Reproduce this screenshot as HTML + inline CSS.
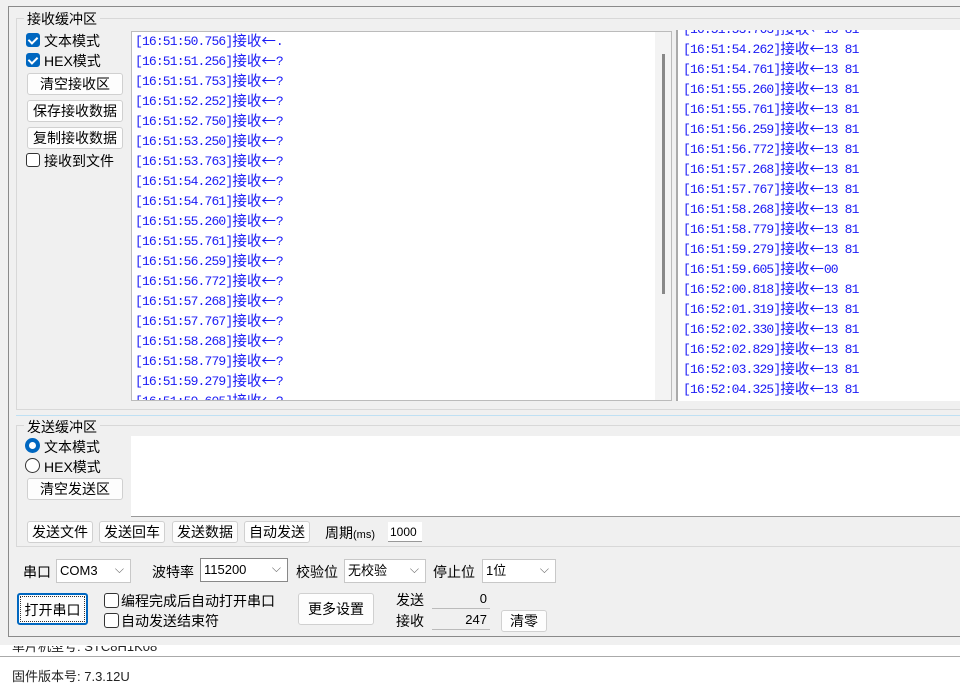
<!DOCTYPE html>
<html><head><meta charset="utf-8"><style>
*{margin:0;padding:0;box-sizing:border-box}
body{width:960px;height:680px;overflow:hidden;background:#fff;font-family:"Liberation Sans","Noto Sans CJK SC",sans-serif;font-size:14px;color:#000;position:relative}
.a{position:absolute}
.log{font-family:"Liberation Mono","Noto Sans CJK SC",monospace;font-size:13px;letter-spacing:-0.85px;color:#1a1af5}
.log div{height:20px;line-height:20px;white-space:nowrap;overflow:visible}
.log b{font-weight:normal;font-size:14.5px;letter-spacing:0;font-family:"Noto Sans CJK SC",sans-serif;line-height:0;position:relative;top:1px}
.btn{position:absolute;background:#fdfdfd;border:1px solid #d0d0d0;border-radius:3px;font-size:14px;text-align:center;line-height:20px;height:22px}
.cb{position:absolute;width:14px;height:14px;border:1px solid #333;border-radius:3px;background:#fff}
.cb.on{background:#0067c0;border-color:#0067c0}
.cb.on::after{content:"";position:absolute;left:3px;top:1px;width:4px;height:7px;border:solid #fff;border-width:0 2px 2px 0;transform:rotate(45deg)}
.rb{position:absolute;width:15px;height:15px;border:1px solid #333;border-radius:50%;background:#fff}
.rb.on{border:4px solid #0067c0}
.sel{position:absolute;background:#fff;border:1px solid #c8c8c8;height:24px;font-size:13px;line-height:22px;padding-left:3px}
.sel::after{content:"⌵";position:absolute;right:6px;top:-2px;color:#666;font-size:12px}
</style></head><body>
<div class="a" style="left:0;top:0;width:960px;height:645px;background:#f0f0f0"></div>
<div class="a" style="left:8px;top:6px;width:960px;height:631px;border:1px solid #8a8a8a"></div>
<div class="a" style="left:16px;top:18px;width:950px;height:392px;border:1px solid #d8d8d8"></div>
<div class="a" style="left:24px;top:9px;background:#f0f0f0;padding:0 3px">接收缓冲区</div>
<div class="cb on" style="left:26px;top:33px"></div><div class="a" style="left:44px;top:31px">文本模式</div>
<div class="cb on" style="left:26px;top:53px"></div><div class="a" style="left:44px;top:51px">HEX模式</div>
<div class="btn" style="left:27px;top:73px;width:96px">清空接收区</div>
<div class="btn" style="left:27px;top:100px;width:96px">保存接收数据</div>
<div class="btn" style="left:27px;top:127px;width:96px">复制接收数据</div>
<div class="cb" style="left:26px;top:153px"></div><div class="a" style="left:44px;top:151px">接收到文件</div>
<div class="a" style="left:131px;top:31px;width:541px;height:370px;background:#fff;border:1px solid #bbb;overflow:hidden">
<div class="log a" style="left:3px;top:0"><div>[16:51:50.756]<b>接收←</b>.</div><div>[16:51:51.256]<b>接收←</b>?</div><div>[16:51:51.753]<b>接收←</b>?</div><div>[16:51:52.252]<b>接收←</b>?</div><div>[16:51:52.750]<b>接收←</b>?</div><div>[16:51:53.250]<b>接收←</b>?</div><div>[16:51:53.763]<b>接收←</b>?</div><div>[16:51:54.262]<b>接收←</b>?</div><div>[16:51:54.761]<b>接收←</b>?</div><div>[16:51:55.260]<b>接收←</b>?</div><div>[16:51:55.761]<b>接收←</b>?</div><div>[16:51:56.259]<b>接收←</b>?</div><div>[16:51:56.772]<b>接收←</b>?</div><div>[16:51:57.268]<b>接收←</b>?</div><div>[16:51:57.767]<b>接收←</b>?</div><div>[16:51:58.268]<b>接收←</b>?</div><div>[16:51:58.779]<b>接收←</b>?</div><div>[16:51:59.279]<b>接收←</b>?</div><div>[16:51:59.605]<b>接收←</b>?</div></div>
<div class="a" style="left:523px;top:0;width:17px;height:370px;background:#f3f3f3"></div>
<div class="a" style="left:530px;top:22px;width:3px;height:240px;background:#888"></div>
</div>
<div class="a" style="left:676px;top:30px;width:290px;height:371px;background:#fff;border-left:2px solid #aaa;overflow:hidden">
<div class="log a" style="left:5px;top:-10px"><div>[16:51:53.763]<b>接收←</b>13 81</div><div>[16:51:54.262]<b>接收←</b>13 81</div><div>[16:51:54.761]<b>接收←</b>13 81</div><div>[16:51:55.260]<b>接收←</b>13 81</div><div>[16:51:55.761]<b>接收←</b>13 81</div><div>[16:51:56.259]<b>接收←</b>13 81</div><div>[16:51:56.772]<b>接收←</b>13 81</div><div>[16:51:57.268]<b>接收←</b>13 81</div><div>[16:51:57.767]<b>接收←</b>13 81</div><div>[16:51:58.268]<b>接收←</b>13 81</div><div>[16:51:58.779]<b>接收←</b>13 81</div><div>[16:51:59.279]<b>接收←</b>13 81</div><div>[16:51:59.605]<b>接收←</b>00</div><div>[16:52:00.818]<b>接收←</b>13 81</div><div>[16:52:01.319]<b>接收←</b>13 81</div><div>[16:52:02.330]<b>接收←</b>13 81</div><div>[16:52:02.829]<b>接收←</b>13 81</div><div>[16:52:03.329]<b>接收←</b>13 81</div><div>[16:52:04.325]<b>接收←</b>13 81</div></div></div>
<div class="a" style="left:16px;top:415px;width:950px;height:1px;background:#bfe0f3"></div>
<div class="a" style="left:16px;top:425px;width:950px;height:122px;border:1px solid #d8d8d8"></div>
<div class="a" style="left:24px;top:417px;background:#f0f0f0;padding:0 3px">发送缓冲区</div>
<div class="rb on" style="left:25px;top:438px"></div><div class="a" style="left:44px;top:437px">文本模式</div>
<div class="rb" style="left:25px;top:458px"></div><div class="a" style="left:44px;top:457px">HEX模式</div>
<div class="btn" style="left:27px;top:478px;width:96px">清空发送区</div>
<div class="a" style="left:131px;top:436px;width:835px;height:81px;background:#fff;border-bottom:1px solid #999"></div>
<div class="btn" style="left:27px;top:521px;width:66px">发送文件</div>
<div class="btn" style="left:99px;top:521px;width:66px">发送回车</div>
<div class="btn" style="left:172px;top:521px;width:66px">发送数据</div>
<div class="btn" style="left:244px;top:521px;width:66px">自动发送</div>
<div class="a" style="left:325px;top:523px">周期<span style="font-size:11px">(ms)</span></div>
<div class="a" style="left:388px;top:522px;width:34px;height:20px;background:#fff;border-bottom:1px solid #999;font-size:12px;line-height:20px;padding-left:2px">1000</div>
<div class="a" style="left:23px;top:562px">串口</div>
<div class="sel" style="left:56px;top:559px;width:75px">COM3</div>
<div class="a" style="left:152px;top:562px">波特率</div>
<div class="sel" style="left:200px;top:558px;width:88px;border-color:#888">115200</div>
<div class="a" style="left:296px;top:562px">校验位</div>
<div class="sel" style="left:344px;top:559px;width:82px">无校验</div>
<div class="a" style="left:433px;top:562px">停止位</div>
<div class="sel" style="left:482px;top:559px;width:74px">1位</div>
<div class="btn" style="left:17px;top:593px;width:71px;height:32px;line-height:30px;border:2px solid #0067c0;outline:1px dotted #333;outline-offset:-4px">打开串口</div>
<div class="cb" style="left:104px;top:593px;width:15px;height:15px"></div><div class="a" style="left:121px;top:591px">编程完成后自动打开串口</div>
<div class="cb" style="left:104px;top:613px;width:15px;height:15px"></div><div class="a" style="left:121px;top:611px">自动发送结束符</div>
<div class="btn" style="left:298px;top:593px;width:76px;height:32px;line-height:30px">更多设置</div>
<div class="a" style="left:396px;top:590px">发送</div>
<div class="a" style="left:432px;top:591px;width:58px;height:18px;border-bottom:1px solid #bbb;text-align:right;font-size:13px;line-height:16px;padding-right:3px">0</div>
<div class="a" style="left:396px;top:611px">接收</div>
<div class="a" style="left:432px;top:612px;width:58px;height:18px;border-bottom:1px solid #bbb;text-align:right;font-size:13px;line-height:16px;padding-right:3px">247</div>
<div class="btn" style="left:501px;top:610px;width:46px">清零</div>
<div class="a" style="left:0;top:656px;width:960px;height:1px;background:#aaa"></div>
<div class="a" style="left:12px;top:646px;font-size:13px;height:10px;overflow:hidden;line-height:14px;color:#222"><div style="margin-top:-6px">单片机型号: STC8H1K08</div></div>
<div class="a" style="left:12px;top:666px;font-size:13px;color:#222">固件版本号: 7.3.12U</div>
</body></html>
